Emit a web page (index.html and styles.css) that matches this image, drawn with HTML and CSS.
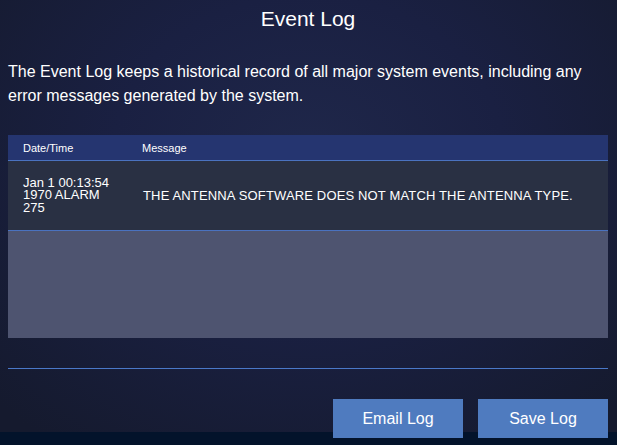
FILE: index.html
```html
<!DOCTYPE html>
<html>
<head>
<meta charset="utf-8">
<link rel="stylesheet" href="styles.css">
</head>
<body>
<div class="page">
  <h1 class="title">Event Log</h1>
  <p class="intro">The Event Log keeps a historical record of all major system events, including any error messages generated by the system.</p>
  <div class="log">
    <div class="log-head">
      <div class="col-date">Date/Time</div>
      <div class="col-msg">Message</div>
    </div>
    <div class="log-row">
      <div class="col-date">Jan 1 00:13:54 1970 ALARM 275</div>
      <div class="col-msg msg-text">THE ANTENNA SOFTWARE DOES NOT MATCH THE ANTENNA TYPE.</div>
    </div>
    <div class="log-empty"></div>
  </div>
  <div class="divider"></div>
  <div class="actions">
    <button class="btn">Email Log</button>
    <button class="btn">Save Log</button>
  </div>
</div>
</body>
</html>
```

FILE: styles.css
```css
html, body {
  margin: 0;
  padding: 0;
  height: 100%;
}
body {
  font-family: "Liberation Sans", Arial, sans-serif;
  color: #ffffff;
  background:
    linear-gradient(to bottom, transparent 432px, #03132b 432px),
    radial-gradient(ellipse 70% 80% at 50% 35%, #1f274a 0%, #1a2042 45%, #151a2e 100%);
  background-color: #151a2e;
  overflow: hidden;
}
.page {
  padding: 7px 9px 0 8px;
  display: flex;
  flex-direction: column;
}
.title {
  margin: 0;
  font-size: 21px;
  font-weight: normal;
  line-height: 24px;
  text-align: center;
}
.intro {
  margin: 29px 0 0;
  font-size: 16px;
  line-height: 24px;
}
.log {
  margin-top: 27px;
  display: flex;
  flex-direction: column;
}
.log-head {
  display: flex;
  align-items: center;
  height: 25px;
  background: #253570;
  border-bottom: 1px solid #4a72c0;
  font-size: 11px;
}
.log-row {
  display: flex;
  align-items: center;
  height: 69px;
  background: #293043;
  border-bottom: 1px solid #4a72c0;
  font-size: 13px;
}
.col-date {
  box-sizing: border-box;
  width: 134px;
  padding: 0 25px 0 15px;
  flex: none;
}
.log-row .col-date {
  line-height: 12.5px;
}
.col-msg {
  flex: 1;
}
.msg-text {
  padding-left: 1px;
  letter-spacing: 0.15px;
}
.log-empty {
  height: 107px;
  background: #4e5470;
}
.divider {
  margin-top: 30px;
  height: 1px;
  background: #4a78c8;
}
.actions {
  margin-top: 30px;
  display: flex;
  justify-content: flex-end;
  gap: 15px;
}
.btn {
  width: 130px;
  height: 39px;
  border: none;
  background: #4f7bbf;
  color: #ffffff;
  font-family: "Liberation Sans", Arial, sans-serif;
  font-size: 16px;
  padding: 0;
}
```
